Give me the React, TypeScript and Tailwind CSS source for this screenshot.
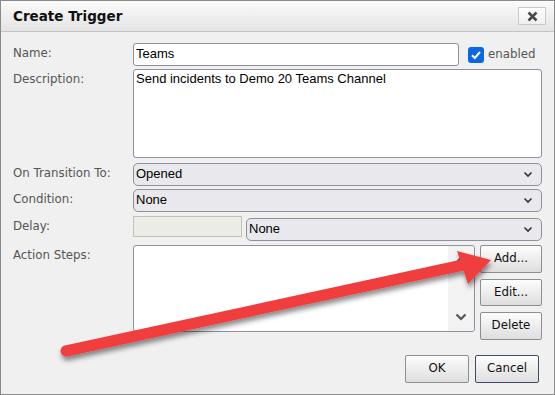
import React from "react";

function Chevron({ className = "" }: { className?: string }) {
  return (
    <svg width="10" height="7" viewBox="0 0 10 7" className={className}>
      <path d="M1.5 1.5 L5 5 L8.5 1.5" fill="none" stroke="#333" strokeWidth="1.6" />
    </svg>
  );
}

function Select({ value, className = "" }: { value: string; className?: string }) {
  return (
    <div
      className={`flex items-center justify-between h-[23px] rounded-[5px] border border-[#8f8f9d] bg-[#e9e9ed] pl-[2px] pr-[8px] text-[13px] leading-[15px] text-black ${className}`}
      style={{ fontFamily: "'Liberation Sans', Arial, sans-serif" }}
    >
      <span className="pb-[3px]">{value}</span>
      <Chevron />
    </div>
  );
}

function Btn({ children, className = "" }: { children: React.ReactNode; className?: string }) {
  return (
    <div
      className={`flex items-center justify-center rounded-[2px] border bg-gradient-to-b from-[#fdfdfd] to-[#dedede] text-[#111] ${className}`}
      style={{ fontFamily: "'DejaVu Sans', sans-serif", fontSize: "11.8px" }}
    >
      {children}
    </div>
  );
}

function Label({ children }: { children: React.ReactNode }) {
  return (
    <div
      className="w-[120px] shrink-0 pt-[3px] leading-[14px] text-[#555]"
      style={{ fontFamily: "'DejaVu Sans', sans-serif", fontSize: "11.8px" }}
    >
      {children}
    </div>
  );
}

export default function App() {
  return (
    <div className="relative w-[555px] h-[395px] overflow-hidden border border-[#8a8a8a] bg-[#f0f0f0]">
      {/* Title bar */}
      <div className="flex h-[31px] items-center justify-between border-b border-[#c4c4c4] bg-gradient-to-b from-[#fbfbfb] to-[#e4e4e4] pl-[12px] pr-[8px]">
        <span className="font-bold text-[#111]" style={{ fontFamily: "'DejaVu Sans', sans-serif", fontSize: "13.5px" }}>
          Create Trigger
        </span>
        <div className="flex h-[18px] w-[28px] items-center justify-center border border-[#c9c9c9] bg-gradient-to-b from-[#ffffff] to-[#efefef]">
          <svg width="11" height="11" viewBox="0 0 11 11">
            <path d="M1.5 1.5 L9.5 9.5 M9.5 1.5 L1.5 9.5" stroke="#4a4a4a" strokeWidth="2.5" />
          </svg>
        </div>
      </div>

      {/* Body */}
      <div className="flex flex-col pl-[12px] pr-[12px] pt-[11px]">
        {/* Name */}
        <div className="flex">
          <Label>Name:</Label>
          <div
            className="flex h-[23px] w-[326px] items-center rounded-[3px] border border-[#8f8f9d] bg-white px-[2px] pb-[2px] text-[13px] leading-[15px] text-black"
            style={{ fontFamily: "'Liberation Sans', Arial, sans-serif" }}
          >
            Teams
          </div>
          <div className="ml-[9px] flex items-center">
            <div className="flex h-[16px] w-[16px] items-center justify-center rounded-[3px] bg-[#0a67e0]">
              <svg width="12" height="12" viewBox="0 0 12 12">
                <path d="M2 6.2 L4.8 9 L10 3" fill="none" stroke="white" strokeWidth="2" />
              </svg>
            </div>
            <span className="ml-[4px] text-[#555]" style={{ fontFamily: "'DejaVu Sans', sans-serif", fontSize: "11.8px" }}>
              enabled
            </span>
          </div>
        </div>

        {/* Description */}
        <div className="mt-[3px] flex">
          <Label>Description:</Label>
          <div
            className="h-[89px] w-[409px] rounded-[3px] border border-[#8f8f9d] bg-white px-[2px] pt-[1px] text-[13px] leading-[15px] text-black"
            style={{ fontFamily: "'Liberation Sans', Arial, sans-serif" }}
          >
            Send incidents to Demo 20 Teams Channel
          </div>
        </div>

        {/* On Transition To */}
        <div className="mt-[5px] flex">
          <Label>On Transition To:</Label>
          <Select value="Opened" className="w-[409px]" />
        </div>

        {/* Condition */}
        <div className="mt-[3px] flex">
          <Label>Condition:</Label>
          <Select value="None" className="w-[409px]" />
        </div>

        {/* Delay */}
        <div className="mt-[4px] flex">
          <Label>Delay:</Label>
          <div className="flex gap-[4px]">
            <div className="h-[21px] w-[109px] border border-[#c2c2bb] bg-[#ececE6]" />
            <Select value="None" className="mt-[2px] h-[22px] w-[296px]" />
          </div>
        </div>

        {/* Action Steps */}
        <div className="mt-[4px] flex">
          <Label>Action Steps:</Label>
          <div className="flex h-[87px] w-[342px] rounded-[3px] border border-[#8f8f9d] bg-white">
            <div className="flex-1" />
            <div className="flex w-[26px] flex-col items-center justify-between rounded-r-[3px] bg-[#f3f3f3] py-[10px]">
              <svg width="12" height="8" viewBox="0 0 12 8">
                <path d="M1.5 6.5 L6 2 L10.5 6.5" fill="none" stroke="#555" strokeWidth="2.2" />
              </svg>
              <svg width="12" height="8" viewBox="0 0 12 8">
                <path d="M1.5 1.5 L6 6 L10.5 1.5" fill="none" stroke="#555" strokeWidth="2.2" />
              </svg>
            </div>
          </div>
          <div className="ml-[5px] flex flex-col gap-[6px]">
            <Btn className="h-[28px] w-[62px] border-[#8e8e8e]">Add...</Btn>
            <Btn className="h-[27px] w-[62px] border-[#8e8e8e]">Edit...</Btn>
            <Btn className="h-[28px] w-[62px] border-[#8e8e8e]">Delete</Btn>
          </div>
        </div>

        {/* OK / Cancel */}
        <div className="mt-[15px] flex justify-end gap-[6px] pr-[3px]">
          <Btn className="h-[28px] w-[64px] border-[#8e8e8e]">OK</Btn>
          <Btn className="h-[28px] w-[64px] border-[#3f4d6b]">Cancel</Btn>
        </div>
      </div>

      {/* Red annotation arrow */}
      <svg className="pointer-events-none absolute left-0 top-0" width="555" height="395" viewBox="0 0 555 395">
        <defs>
          <filter id="sh" x="-10%" y="-10%" width="120%" height="140%">
            <feDropShadow dx="1" dy="4" stdDeviation="2.5" floodColor="#000" floodOpacity="0.45" />
          </filter>
        </defs>
        <g filter="url(#sh)">
          <line x1="65" y1="350" x2="462" y2="264" stroke="#f03c3c" strokeWidth="11" strokeLinecap="round" />
          <polygon points="490,259 456,250 467,283" fill="#f03c3c" />
        </g>
      </svg>
    </div>
  );
}
